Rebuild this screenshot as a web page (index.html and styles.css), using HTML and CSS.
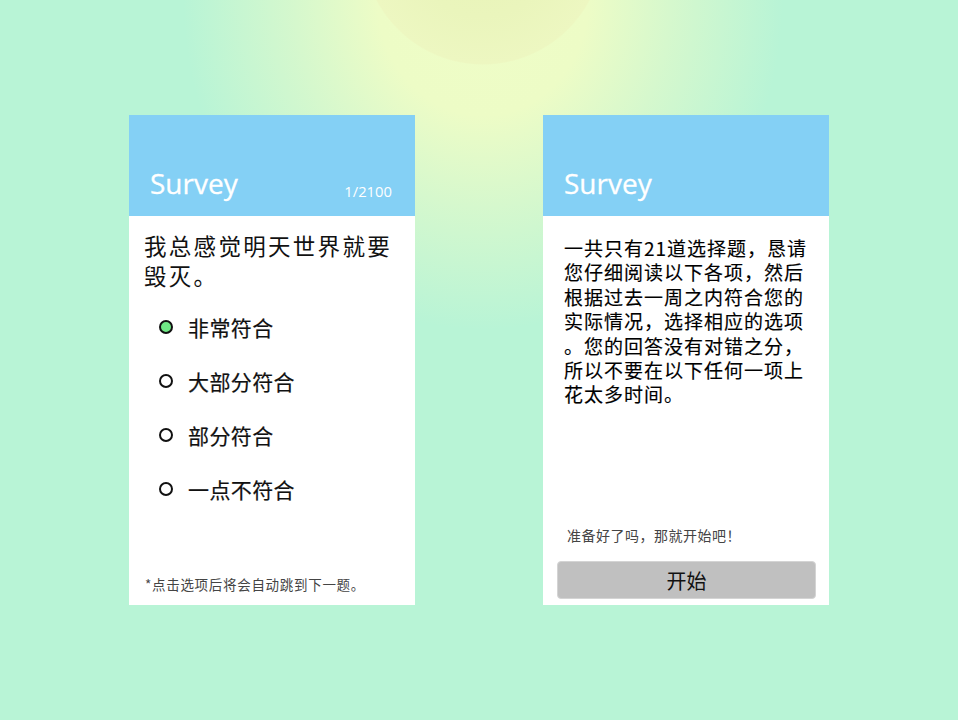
FILE: index.html
```html
<!DOCTYPE html>
<html lang="zh-CN">
<head>
<meta charset="utf-8">
<title>Survey</title>
<link rel="stylesheet" href="styles.css">
</head>
<body>
<div class="stage">
  <section class="card">
    <header class="card-head">
      <div class="head-row">
        <span class="title">Survey</span>
        <span class="count">1/2100</span>
      </div>
    </header>
    <div class="card-body">
      <p class="question">我总感觉明天世界就要<br>毁灭。</p>
      <ul class="options">
        <li class="option"><span class="radio checked"></span><span class="label">非常符合</span></li>
        <li class="option"><span class="radio"></span><span class="label">大部分符合</span></li>
        <li class="option"><span class="radio"></span><span class="label">部分符合</span></li>
        <li class="option"><span class="radio"></span><span class="label">一点不符合</span></li>
      </ul>
      <p class="note">*点击选项后将会自动跳到下一题。</p>
    </div>
  </section>
  <section class="card">
    <header class="card-head">
      <div class="head-row">
        <span class="title">Survey</span>
      </div>
    </header>
    <div class="card-body intro-body">
      <p class="intro">一共只有21道选择题，恳请<br>您仔细阅读以下各项，然后<br>根据过去一周之内符合您的<br>实际情况，选择相应的选项<br>。您的回答没有对错之分，<br>所以不要在以下任何一项上<br>花太多时间。</p>
      <p class="ready">准备好了吗，那就开始吧！</p>
      <button class="start">开始</button>
    </div>
  </section>
</div>
</body>
</html>
```
FILE: styles.css
```css
html, body {
  margin: 0;
  padding: 0;
  height: 100%;
}
body {
  font-family: "Noto Sans CJK SC", "Noto Sans", sans-serif;
  background-color: #b8f4d6;
  background-image:
    radial-gradient(circle 121px at 483px -56px, #e8f4b7 0%, #eaf5bc 60%, #edf7c1 99%, rgba(238,248,195,0) 100%),
    radial-gradient(ellipse 300px 330px at 483px 0px, #effdc7 0%, #edfcc6 35%, rgba(230,250,200,0.6) 65%, rgba(184,244,214,0) 100%);
  background-repeat: no-repeat;
}
.stage {
  height: 720px;
  display: flex;
  justify-content: center;
  align-items: center;
  gap: 128px;
}
.card {
  width: 286px;
  height: 490px;
  background: #ffffff;
  display: flex;
  flex-direction: column;
}
.card-head {
  height: 101px;
  box-sizing: border-box;
  background: #84d0f5;
  display: flex;
  align-items: flex-end;
  padding: 0 23px 19px 21px;
  color: #ffffff;
  font-family: "Open Sans", "Noto Sans", sans-serif;
}
.head-row {
  width: 100%;
  display: flex;
  justify-content: space-between;
  align-items: flex-end;
}
.title {
  font-size: 28px;
  line-height: 28px;
  -webkit-text-stroke: 0.3px #fff;
}
.count {
  font-size: 14.8px;
  line-height: 12px;
}
.card-body {
  flex: 1;
  display: flex;
  flex-direction: column;
  padding: 0 16px 0 16px;
}
.question {
  margin: 14px 0 0 -1px;
  font-size: 22.5px;
  line-height: 30px;
  letter-spacing: 2.3px;
  color: #111;
  white-space: nowrap;
}
.options {
  list-style: none;
  margin: 23px 0 0 0;
  padding: 0 0 0 14px;
  display: flex;
  flex-direction: column;
  gap: 26px;
}
.option {
  display: flex;
  align-items: center;
  height: 28px;
  gap: 15px;
}
.radio {
  width: 10px;
  height: 10px;
  border: 2px solid #111;
  border-radius: 50%;
  background: #fff;
  flex: none;
}
.radio.checked {
  background: #6fe885;
}
.label {
  font-size: 21px;
  letter-spacing: 0.4px;
  color: #111;
  -webkit-text-stroke: 0.2px #111;
}
.note {
  margin: auto 0 11px 0;
  font-size: 13.5px;
  letter-spacing: 0.7px;
  color: #444;
  white-space: nowrap;
}
.intro-body {
  padding: 0 13px 6px 14px;
}
.intro {
  margin: 20px 0 0 7px;
  font-size: 19px;
  line-height: 24.4px;
  letter-spacing: 1px;
  color: #000;
  -webkit-text-stroke: 0.15px #000;
  white-space: nowrap;
}
.ready {
  margin: auto 0 16px 10px;
  font-size: 14px;
  letter-spacing: 0.5px;
  color: #444;
}
.start {
  height: 38px;
  width: 100%;
  background: #c0c0c0;
  border: 1.5px solid #d4d4d4;
  border-radius: 4px;
  font-family: "Noto Sans CJK SC", "Noto Sans", sans-serif;
  font-size: 20px;
  color: #111;
  padding: 0;
}
```
